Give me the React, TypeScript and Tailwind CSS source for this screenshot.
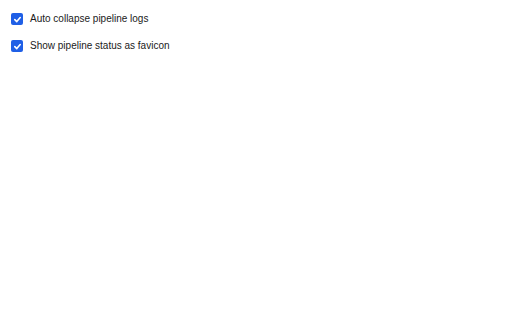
import React from "react";

function Check({ label }: { label: string }) {
  return (
    <label className="flex items-center gap-[7px] h-[14px]">
      <span className="w-[12px] h-[12px] rounded-[2px] bg-[#1f5fe6] flex items-center justify-center shrink-0">
        <svg width="9" height="9" viewBox="0 0 10 10" fill="none">
          <path d="M2 5.2 L4.2 7.3 L8 2.8" stroke="white" strokeWidth="1.8" strokeLinecap="round" strokeLinejoin="round" />
        </svg>
      </span>
      <span className="text-[10px] text-[#1a1a1a] leading-none">{label}</span>
    </label>
  );
}

export default function App() {
  return (
    <div className="w-[512px] h-[320px] bg-white pl-[11px] pt-[12px] flex flex-col gap-[13px]" style={{ fontFamily: '"Liberation Sans", Arial, sans-serif' }}>
      <Check label="Auto collapse pipeline logs" />
      <Check label="Show pipeline status as favicon" />
    </div>
  );
}
